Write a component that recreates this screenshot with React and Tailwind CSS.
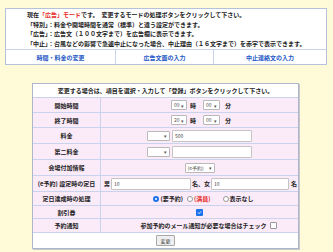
import React from 'react';

const jp = "font-['Noto_Sans_CJK_JP','Noto_Sans',sans-serif]";

function FakeSelect({ value, w }) {
  return (
    <div
      className={`flex items-center justify-between h-[10px] ${w} bg-white border border-[#b9b9b9] rounded-[1px] px-[2px] text-[5px] text-[#555] font-normal`}
    >
      <span>{value}</span>
      <span className="text-[5px] leading-none">▾</span>
    </div>
  );
}

function Radio({ checked }) {
  return checked ? (
    <div className="w-[6px] h-[6px] rounded-full bg-[#1a73e8] flex items-center justify-center">
      <div className="w-[2px] h-[2px] rounded-full bg-white" />
    </div>
  ) : (
    <div className="w-[6px] h-[6px] rounded-full border border-[#999] bg-white" />
  );
}

function Check({ checked }) {
  return checked ? (
    <div className="w-[7px] h-[7px] rounded-[1px] bg-[#1a73e8] flex items-center justify-center">
      <svg width="5" height="5" viewBox="0 0 10 10">
        <path d="M2 5 L4.2 7.2 L8.2 2.8" stroke="white" strokeWidth="1.8" fill="none" />
      </svg>
    </div>
  ) : (
    <div className="w-[7px] h-[7px] rounded-[1px] border border-[#999] bg-white" />
  );
}

function Row({ label, h, children, className = '' }) {
  return (
    <div className={`flex ${h} border-b border-[#c9d3ee]`}>
      <div className="w-[68px] shrink-0 flex items-center justify-center bg-[#fbeaf8] border-r border-[#c9d3ee] whitespace-nowrap">
        {label}
      </div>
      <div className={`flex-1 flex items-center bg-[#fbeaf8] ${className}`}>{children}</div>
    </div>
  );
}

export default function App() {
  return (
    <div className={`w-[333px] h-[252px] bg-[#fffad8] overflow-hidden pt-[8px] ${jp} font-bold text-[6px] text-[#222]`}>
      <div className="ml-[5px] w-[322px] bg-white border border-[#b6c1dc]">
        <div className="pl-[21px] pt-[1px] leading-[9.5px] h-[40px]">
          <div>
            現在<span className="text-[#e8302a]">「広告」モード</span>です。　変更するモードの処理ボタンをクリックして下さい。
          </div>
          <div>「特別」：料金や開場時間を通常（標準）と違う設定ができます。</div>
          <div>「広告」：広告文（１００文字まで）を広告欄に表示できます。</div>
          <div>「中止」：台風などの影響で急遽中止になった場合、中止理由（１６文字まで）を赤字で表示できます。</div>
        </div>
        <div className="flex h-[15px] border-t border-[#c9d3ee] text-[#2457c5]">
          <div className="w-[110px] flex items-center justify-center border-r border-[#c9d3ee]">時間・料金の変更</div>
          <div className="w-[98px] flex items-center justify-center border-r border-[#c9d3ee]">広告文面の入力</div>
          <div className="flex-1 flex items-center justify-center">中止連絡文の入力</div>
        </div>
      </div>

      <div className="ml-[32px] mt-[18px] w-[267px] bg-white border border-[#aeb6cc] shadow-[1px_1px_0_#c8c8c8]">
        <div className="h-[14px] flex items-center justify-center border-b border-[#c9d3ee]">
          変更する場合は、項目を選択・入力して「登録」ボタンをクリックして下さい。
        </div>
        <Row label="開始時間" h="h-[15px]" className="justify-center">
          <div className="flex items-center pl-[3px]">
            <FakeSelect value="09" w="w-[16px]" />
            <span className="ml-[3px]">時</span>
            <span className="ml-[7px]"><FakeSelect value="00" w="w-[17px]" /></span>
            <span className="ml-[5px]">分</span>
          </div>
        </Row>
        <Row label="終了時間" h="h-[15px]" className="justify-center">
          <div className="flex items-center pl-[3px]">
            <FakeSelect value="20" w="w-[16px]" />
            <span className="ml-[3px]">時</span>
            <span className="ml-[7px]"><FakeSelect value="00" w="w-[17px]" /></span>
            <span className="ml-[5px]">分</span>
          </div>
        </Row>
        <Row label="料金" h="h-[16px]" className="justify-center">
          <div className="flex items-center">
            <FakeSelect value="" w="w-[23px]" />
            <div className="ml-[2px] w-[80px] h-[12px] bg-white border border-[#c4c4c4] rounded-[1px] px-[2px] flex items-center text-[5px] font-normal text-[#444]">
              500
            </div>
          </div>
        </Row>
        <Row label="第二料金" h="h-[16px]" className="justify-center">
          <div className="flex items-center">
            <FakeSelect value="" w="w-[23px]" />
            <div className="ml-[2px] w-[80px] h-[12px] bg-white border border-[#c4c4c4] rounded-[1px]" />
          </div>
        </Row>
        <Row label="会場付加情報" h="h-[16px]" className="justify-center">
          <FakeSelect value="(e予約)" w="w-[30px]" />
        </Row>
        <Row label="(e予約) 設定時の定日" h="h-[16px]" className="pl-[3px]">
          <span>男</span>
          <div className="ml-[1px] w-[80px] h-[12px] bg-white border border-[#c4c4c4] rounded-[1px] px-[2px] flex items-center text-[5px] font-normal text-[#444]">
            10
          </div>
          <span className="ml-[1px]">名、女</span>
          <div className="ml-[1px] w-[78px] h-[12px] bg-white border border-[#c4c4c4] rounded-[1px] px-[2px] flex items-center text-[5px] font-normal text-[#444]">
            10
          </div>
          <span className="ml-[2px]">名</span>
        </Row>
        <Row label="定日達成時の処理" h="h-[14px]" className="justify-center">
          <div className="flex items-center pl-[8px]">
            <Radio checked />
            <span className="ml-[1px]">(要予約)</span>
            <span className="ml-[4px]"><Radio /></span>
            <span className="ml-[1px] text-[#e8302a]">(満員)</span>
            <span className="ml-[12px]"><Radio /></span>
            <span className="ml-[1px]">表示なし</span>
          </div>
        </Row>
        <Row label="割引券" h="h-[13px]" className="justify-center">
          <Check checked />
        </Row>
        <Row label="予約通知" h="h-[14px]" className="justify-center">
          <div className="flex items-center pl-[18px]">
            <span>参加予約のメール通知が必要な場合はチェック</span>
            <span className="ml-[3px]"><Check /></span>
          </div>
        </Row>
        <div className="h-[15px] flex items-center justify-center">
          <div className="h-[11px] px-[3px] flex items-center bg-[#efefef] border border-[#a8a8a8] rounded-[1px] text-[5px] font-normal text-[#333]">
            変更
          </div>
        </div>
      </div>
    </div>
  );
}
